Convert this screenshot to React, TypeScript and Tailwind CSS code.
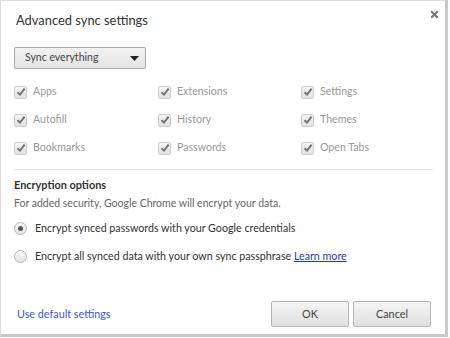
import React from "react";

const font = { fontFamily: 'Lato, "Noto Sans", sans-serif' };

function Check({ label }: { label: string }) {
  return (
    <div className="flex items-center h-[28px]">
      <div className="w-[13px] h-[13px] rounded-[2px] border border-[#cfcfcf] bg-gradient-to-b from-[#f4f4f4] to-[#e2e2e2] flex items-center justify-center">
        <svg width="10" height="10" viewBox="0 0 10 10">
          <path d="M1.5 5.2 L4 7.6 L8.6 1.6" stroke="#707070" strokeWidth="1.9" fill="none" />
        </svg>
      </div>
      <span className="ml-[6px] text-[10.6px] text-[#999]">{label}</span>
    </div>
  );
}

function Radio({ checked, children }: { checked?: boolean; children: React.ReactNode }) {
  return (
    <div className="flex items-center h-[28px]">
      <div className="w-[13px] h-[13px] rounded-full border border-[#b5b5b5] bg-gradient-to-b from-[#f8f8f8] to-[#e4e4e4] flex items-center justify-center">
        {checked && <div className="w-[5px] h-[5px] rounded-full bg-[#555]" />}
      </div>
      <span className="ml-[8px] text-[10.7px] text-[#333]">{children}</span>
    </div>
  );
}

export default function App() {
  return (
    <div className="w-[450px] h-[338px] bg-white" style={font}>
      <div className="w-[448px] h-[337px] bg-white border-t border-l border-[#dcdcdc] border-r-[3px] border-b-[3px] border-r-[#c9c9c9] border-b-[#c9c9c9] relative flex flex-col pl-[13px] pr-[12px]">
        <button className="absolute right-[6px] top-[9px] w-[9px] h-[9px]">
          <svg width="9" height="9" viewBox="0 0 9 9">
            <path d="M1.2 1.2 L7.8 7.8 M7.8 1.2 L1.2 7.8" stroke="#777" strokeWidth="2" />
          </svg>
        </button>
        <div className="pt-[8px] pl-[2px] text-[12.9px] text-[#333] leading-[22px]">Advanced sync settings</div>
        <div className="mt-[16px] w-[132px] h-[22px] border border-[#aaa] rounded-[2px] bg-gradient-to-b from-[#f2f2f2] to-[#e4e4e4] flex items-center pl-[10px] pr-[6px] justify-between">
          <span className="text-[10.5px] text-[#444]">Sync everything</span>
          <svg width="9" height="5" viewBox="0 0 9 5">
            <path d="M0 0 H9 L4.5 5 Z" fill="#222" />
          </svg>
        </div>
        <div className="mt-[9px] grid grid-cols-[144px_143px_1fr]">
          <Check label="Apps" />
          <Check label="Extensions" />
          <Check label="Settings" />
          <Check label="Autofill" />
          <Check label="History" />
          <Check label="Themes" />
          <Check label="Bookmarks" />
          <Check label="Passwords" />
          <Check label="Open Tabs" />
        </div>
        <div className="mt-[7px] h-px bg-[#e6e6e6]" />
        <div className="mt-[6px] text-[10.9px] font-bold text-[#333] leading-[18px]">Encryption options</div>
        <div className="text-[10.5px] text-[#666] leading-[18px]">For added security, Google Chrome will encrypt your data.</div>
        <div className="mt-[2px]">
          <Radio checked>Encrypt synced passwords with your Google credentials</Radio>
          <Radio>
            Encrypt all synced data with your own sync passphrase{" "}
            <a className="text-[#1a3cc8] underline">Learn more</a>
          </Radio>
        </div>
        <div className="mt-auto mb-[7px] flex items-center justify-between">
          <a className="ml-[3px] text-[10.8px] text-[#3c5bc8]">Use default settings</a>
          <div className="flex gap-[4px] mr-[2px]">
            <button className="w-[78px] h-[26px] border border-[#b5b5b5] rounded-[2px] bg-gradient-to-b from-[#f4f4f4] to-[#e0e0e0] text-[10.8px] text-[#444]">OK</button>
            <button className="w-[78px] h-[26px] border border-[#b5b5b5] rounded-[2px] bg-gradient-to-b from-[#f4f4f4] to-[#e0e0e0] text-[10.8px] text-[#444]">Cancel</button>
          </div>
        </div>
      </div>
    </div>
  );
}
